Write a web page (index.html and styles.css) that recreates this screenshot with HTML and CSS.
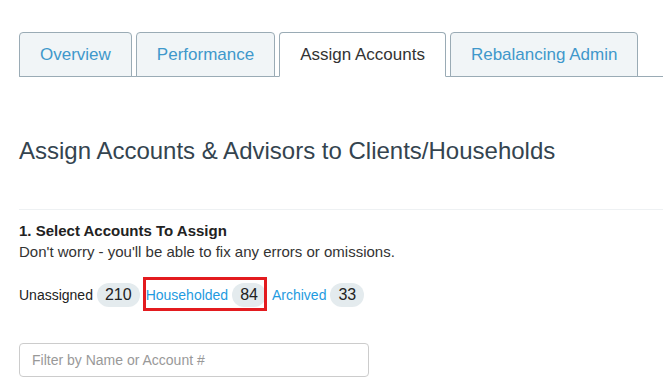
FILE: index.html
```html
<!DOCTYPE html>
<html lang="en">
<head>
<meta charset="utf-8">
<title>Assign Accounts</title>
<link rel="stylesheet" href="styles.css">
</head>
<body>
<div class="page">
  <ul class="tabs">
    <li class="tab"><a href="#">Overview</a></li>
    <li class="tab"><a href="#">Performance</a></li>
    <li class="tab active"><a href="#">Assign Accounts</a></li>
    <li class="tab"><a href="#">Rebalancing Admin</a></li>
  </ul>

  <h1 class="title">Assign Accounts &amp; Advisors to Clients/Households</h1>

  <section class="step">
    <h4 class="step-title">1. Select Accounts To Assign</h4>
    <p class="step-text">Don't worry - you'll be able to fix any errors or omissions.</p>

    <div class="filters">
      <span class="filter current">Unassigned</span><span class="badge">210</span>
      <span class="highlight"><a class="filter" href="#">Householded</a><span class="badge">84</span></span>
      <a class="filter" href="#">Archived</a><span class="badge">33</span>
    </div>

    <input class="search" type="text" placeholder="Filter by Name or Account #">
  </section>
</div>
</body>
</html>
```

FILE: styles.css
```css
* { box-sizing: border-box; }

body {
  margin: 0;
  background: #fff;
  font-family: "Liberation Sans", Arial, sans-serif;
  color: #333;
}

.page {
  padding: 32px 0 0 19px;
}

.tabs {
  display: flex;
  list-style: none;
  margin: 0;
  padding: 0;
  border-bottom: 1px solid #9aabb5;
}

.tab {
  margin: 0 4px -1px 0;
}

.tab a {
  display: block;
  padding: 10px 20px;
  font-size: 17px;
  line-height: 23px;
  color: #3f98cb;
  text-decoration: none;
  background: #f1f5f7;
  border: 1px solid #9aabb5;
  border-radius: 4px 4px 0 0;
}

.tab.active a {
  background: #fff;
  color: #333;
  border-bottom-color: #fff;
}

.title {
  margin: 61px 0 0;
  font-size: 24px;
  line-height: 26px;
  font-weight: normal;
  color: #34444f;
}

.step {
  margin-top: 45px;
  padding-top: 10px;
  border-top: 1px solid #eef1f3;
}

.step-title {
  margin: 0;
  font-size: 15px;
  line-height: 21px;
  font-weight: bold;
  color: #222;
}

.step-text {
  margin: 0;
  font-size: 15px;
  line-height: 22px;
  color: #333;
}

.filters {
  display: flex;
  align-items: center;
  margin-top: 20px;
  font-size: 14px;
}

.filter {
  color: #1f9be0;
  text-decoration: none;
}

.filter.current {
  color: #222;
}

.badge {
  display: inline-block;
  height: 24px;
  line-height: 24px;
  padding: 0 8px;
  margin: 0 6px 0 4px;
  border-radius: 12px;
  background: #e4ebee;
  color: #222;
  font-size: 16px;
}

.highlight {
  position: relative;
  display: flex;
  align-items: center;
}

.highlight .badge {
  margin-right: 0;
}

.highlight::after {
  content: "";
  position: absolute;
  top: -6px;
  bottom: -4px;
  left: -3px;
  right: -1px;
  border: 3px solid #e31b1f;
  pointer-events: none;
}

.highlight + .filter {
  margin-left: 6px;
}

.search {
  display: block;
  width: 350px;
  height: 34px;
  margin-top: 36px;
  padding: 6px 12px;
  border: 1px solid #ccc;
  border-radius: 4px;
  font-family: "Liberation Sans", Arial, sans-serif;
  font-size: 14px;
  color: #555;
}

.search::placeholder {
  color: #999;
}
```
